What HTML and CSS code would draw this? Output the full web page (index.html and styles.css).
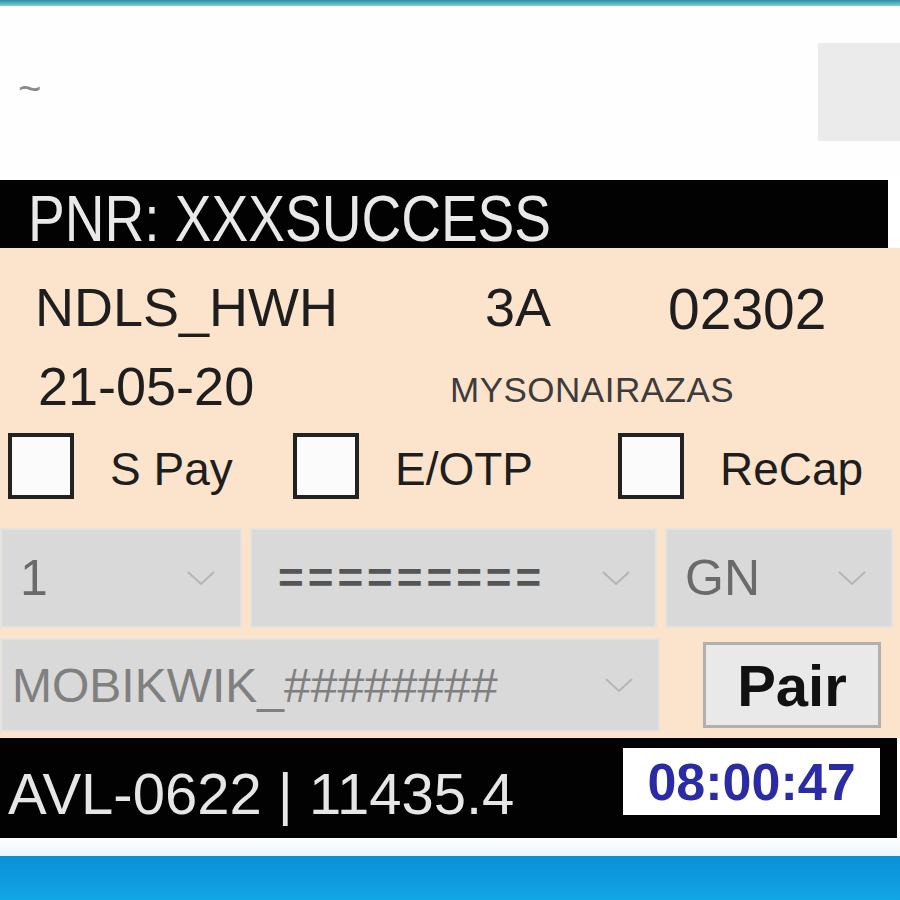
FILE: index.html
```html
<!DOCTYPE html>
<html lang="en">
<head>
    <meta charset="UTF-8">
    <title>PNR Status</title>
    <link rel="stylesheet" href="styles.css">
</head>
<body>
    <div class="window">
        <div class="title-line"></div>

        <div class="top-area">
            <span class="tilde">~</span>
            <div class="top-tile"></div>
        </div>

        <div class="pnr-bar">
            <span class="narrow pnr-text">PNR: XXXSUCCESS</span>
        </div>

        <div class="panel">
            <div class="info-row">
                <span class="big">NDLS_HWH</span>
                <span class="big">3A</span>
                <span class="big">02302</span>
            </div>
            <div class="info-row second">
                <span class="big">21-05-20</span>
                <span class="small-name">MYSONAIRAZAS</span>
            </div>

            <div class="check-row">
                <label class="check"><span class="box"></span><span>S Pay</span></label>
                <label class="check"><span class="box"></span><span>E/OTP</span></label>
                <label class="check"><span class="box"></span><span>ReCap</span></label>
            </div>

            <div class="combo-row">
                <div class="combo">
                    <span>1</span>
                    <svg class="chev" viewBox="0 0 30 16"><polyline points="2,2 15,14 28,2"/></svg>
                </div>
                <div class="combo">
                    <span class="mid">=========</span>
                    <svg class="chev" viewBox="0 0 30 16"><polyline points="2,2 15,14 28,2"/></svg>
                </div>
                <div class="combo">
                    <span>GN</span>
                    <svg class="chev" viewBox="0 0 30 16"><polyline points="2,2 15,14 28,2"/></svg>
                </div>
            </div>

            <div class="pay-row">
                <div class="combo wallet">
                    <span>MOBIKWIK_########</span>
                    <svg class="chev" viewBox="0 0 30 16"><polyline points="2,2 15,14 28,2"/></svg>
                </div>
                <button class="pair-btn">Pair</button>
            </div>
        </div>

        <div class="status-bar">
            <span class="avl">AVL-0622 | 11435.4</span>
            <span class="clock">08:00:47</span>
        </div>

        <div class="gap-line"></div>
        <div class="taskbar"></div>
    </div>
</body>
</html>
```

FILE: styles.css
```css
* {
    margin: 0;
    padding: 0;
    box-sizing: border-box;
}

body {
    font-family: 'Liberation Sans', Arial, sans-serif;
    background: #ffffff;
    width: 900px;
    height: 900px;
    overflow: hidden;
}

.window {
    display: flex;
    flex-direction: column;
    height: 900px;
}

.title-line {
    height: 6px;
    background: linear-gradient(#2e8f9c, #7fd0dc);
}

.top-area {
    height: 169px;
    display: flex;
    justify-content: space-between;
    align-items: flex-start;
    background: #fefefe;
}

.tilde {
    font-size: 40px;
    color: #8a8a8a;
    margin: 60px 0 0 18px;
}

.top-tile {
    width: 82px;
    height: 98px;
    margin-top: 37px;
    background: #ebebeb;
}

.narrow {
    display: inline-block;
    transform-origin: left center;
    white-space: nowrap;
}

.pnr-bar {
    height: 68px;
    width: 888px;
    margin-top: 5px;
    background: #020202;
    display: flex;
    align-items: center;
    padding-left: 28px;
}

.pnr-text {
    font-size: 64px;
    color: #e9e9e9;
    transform: scaleX(0.86);
    line-height: 1;
    margin-top: 10px;
}

.panel {
    height: 490px;
    background: #fce4cc;
    padding-top: 28px;
    display: flex;
    flex-direction: column;
}

.info-row {
    display: grid;
    grid-template-columns: 450px 183px auto;
    padding-left: 35px;
    height: 78px;
    align-items: start;
    color: #1e1e1e;
}

.info-row.second {
    grid-template-columns: 412px auto;
    padding-left: 38px;
    height: 64px;
    align-items: center;
}

.big {
    font-size: 54px;
    white-space: nowrap;
}

.info-row .big:nth-child(3) {
    font-size: 57px;
}

.small-name {
    font-size: 35px;
    color: #3c3c3c;
    letter-spacing: 0.5px;
    margin-top: 8px;
}

.check-row {
    display: grid;
    grid-template-columns: 285px 325px auto;
    padding-left: 8px;
    margin-top: 12px;
    height: 72px;
    align-items: center;
}

.check {
    display: flex;
    align-items: center;
    gap: 36px;
    font-size: 46px;
    color: #1e1e1e;
}

.check span:last-child {
    margin-top: 6px;
}

.box {
    width: 66px;
    height: 66px;
    border: 4px solid #222;
    background: #fbfbfb;
}

.combo-row {
    display: grid;
    grid-template-columns: 242px 407px 228px;
    gap: 8px;
    margin-top: 26px;
    height: 100px;
}

.combo {
    background: #d9d9d9;
    border: 2px solid #e6e3df;
    display: flex;
    align-items: center;
    justify-content: space-between;
    padding: 0 24px 0 18px;
    font-size: 50px;
    color: #6a6a6a;
}

.combo .mid {
    font-size: 44px;
    font-weight: 700;
    letter-spacing: 4px;
    padding-left: 8px;
    color: #555;
}

.chev {
    width: 30px;
    height: 16px;
    fill: none;
    stroke: #b5b5b5;
    stroke-width: 2;
}

.pay-row {
    display: flex;
    align-items: center;
    margin-top: 10px;
    height: 94px;
}

.wallet {
    width: 660px;
    height: 94px;
    padding-left: 10px;
    font-size: 48px;
    color: #808080;
}

.pair-btn {
    margin-left: 43px;
    width: 178px;
    height: 86px;
    background: #e9e9e9;
    border: 3px solid #b0b0b0;
    font-family: 'Liberation Sans', Arial, sans-serif;
    font-size: 58px;
    font-weight: 700;
    color: #111;
}

.status-bar {
    height: 100px;
    width: 897px;
    background: #020202;
    display: flex;
    align-items: flex-start;
    justify-content: space-between;
    padding: 10px 17px 0 8px;
}

.avl {
    font-size: 58px;
    color: #e6e6e6;
    white-space: nowrap;
    margin-top: 12px;
}

.clock {
    background: #ffffff;
    width: 257px;
    height: 67px;
    display: flex;
    align-items: center;
    justify-content: center;
    font-size: 52px;
    font-weight: 700;
    color: #2b2ba6;
}

.gap-line {
    height: 18px;
    background: linear-gradient(#ffffff, #e8f7fd);
}

.taskbar {
    flex: 1;
    background: linear-gradient(#0b8fd6, #11a6e6);
}
```
